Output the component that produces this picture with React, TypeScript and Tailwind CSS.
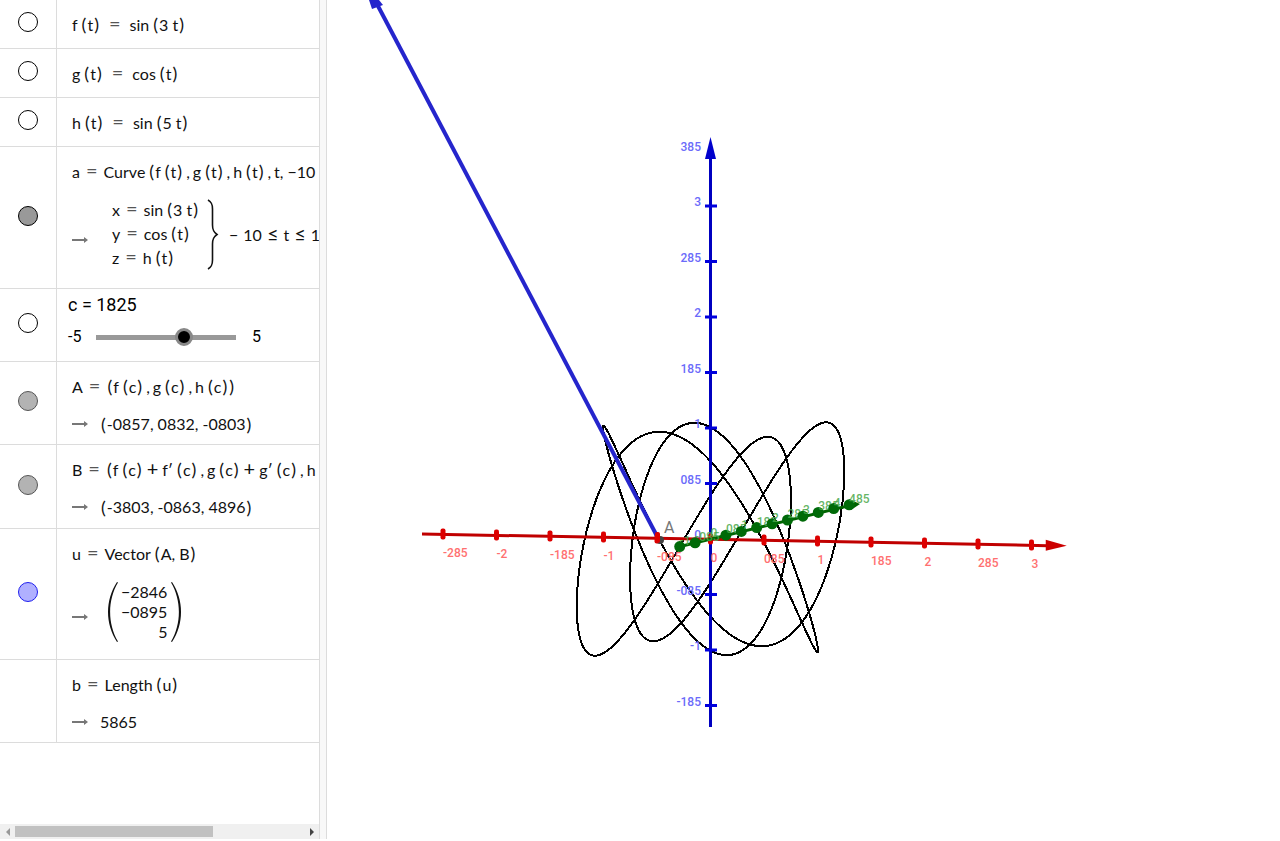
import type { ReactNode } from "react";

// Where the origin and the unit vectors of the 3D scene land on the canvas
const ORIGIN = { x: 710.5, y: 539 };
const UNIT_X = { x: 107, y: 2 };
const UNIT_Y = { x: 30.8, y: -7.6 };
const UNIT_Z = { x: 0, y: -111 };

const X_LABELS = ["-285", "-2", "-185", "-1", "-085", "0", "085", "1", "185", "2", "285", "3"];
const Y_LABELS = ["-1", "-085", "0", "085", "1", "185", "2", "285", "3", "385", "4", "485"];
const Z_LABELS = ["-185", "-1", "-085", "0", "085", "1", "185", "2", "285", "3", "385"];

function project(x: number, y: number, z: number) {
  return {
    x: ORIGIN.x + x * UNIT_X.x + y * UNIT_Y.x + z * UNIT_Z.x,
    y: ORIGIN.y + x * UNIT_X.y + y * UNIT_Y.y + z * UNIT_Z.y,
  };
}

const CURVE_POINTS = Array.from({ length: 801 }, (_, i) => {
  const t = (i / 800) * 2 * Math.PI;
  const p = project(Math.sin(3 * t), Math.cos(t), Math.sin(5 * t));
  return `${p.x.toFixed(1)},${p.y.toFixed(1)}`;
}).join(" ");

export default function App() {
  return (
    <div className="flex h-screen overflow-hidden bg-white text-[#111]">
      <AlgebraView />
      <div className="mb-0.5 w-[7px] shrink-0 border-r border-[#dcdcdc] bg-[#f8f8f8]" />
      <main className="min-w-0 flex-1">
        <Graphics />
      </main>
    </div>
  );
}

function AlgebraView() {
  return (
    <aside className="mb-0.5 flex w-80 shrink-0 flex-col border-r border-[#dcdcdc] font-['Lato',sans-serif] text-base leading-6">
      <ul className="min-h-0 flex-1 overflow-hidden">
        <Row name="f" marker="border-black bg-white" pad="pb-[11px]">
          <Definition>
            <Call name="f" arg="t" /><Eq wide /><Call name="sin" arg="3 t" />
          </Definition>
        </Row>
        <Row name="g" marker="border-black bg-white" pad="pb-[11px]">
          <Definition>
            <Call name="g" arg="t" /><Eq wide /><Call name="cos" arg="t" />
          </Definition>
        </Row>
        <Row name="h" marker="border-black bg-white" pad="pb-[11px]">
          <Definition>
            <Call name="h" arg="t" /><Eq wide /><Call name="sin" arg="5 t" />
          </Definition>
        </Row>
        <Row name="a" marker="border-black bg-[#999]" pad="pb-[17px]">
          <Definition>
            a<Eq />Curve<span className="ml-[3px]"><Paren>(</Paren></span>
            <Call name="f" arg="t" /><Comma /><Call name="g" arg="t" /><Comma />
            <Call name="h" arg="t" /><Comma />t,<span className="ml-1">−10</span>
          </Definition>
          <Output tall>
            <div className="ml-3 h-[73px]">
              <div>x<Eq /><Call name="sin" arg="3 t" /></div>
              <div>y<Eq /><Call name="cos" arg="t" /></div>
              <div>z<Eq /><Call name="h" arg="t" /></div>
            </div>
            <svg className="ml-2 h-[73px] w-3 shrink-0" viewBox="0 0 12 73" fill="none" stroke="#111" strokeWidth="1.6">
              <path d="M1 2C4.500 4 5.500 6 5.500 11V27C5.500 32 6.500 34 10 36.500C6.500 39 5.500 41 5.500 46V62C5.500 67 4.500 69 1 71" />
            </svg>
            <div className="ml-2.5 flex items-baseline gap-[5px]">
              <span>−</span><span>10</span><Big>≤</Big><span>t</span><Big>≤</Big><span>10</span>
            </div>
          </Output>
        </Row>
        <li className="flex border-b border-[#dcdcdc]">
          <Marker name="c" marker="border-black bg-white" />
          <div className="flex-1 pb-2.5 pl-[11px] pt-1 font-['Roboto',sans-serif] text-black">
            <label htmlFor="c" className="block text-lg leading-6">c = 1825</label>
            <div className="mt-1.5 flex h-7 items-center">
              <span className="w-7">-5</span>
              <input
                id="c"
                type="range"
                min={-5}
                max={5}
                step={0.05}
                defaultValue={1.45}
                className="h-[18px] w-[140px] appearance-none bg-transparent [&::-webkit-slider-runnable-track]:h-[5px] [&::-webkit-slider-runnable-track]:bg-[#999] [&::-webkit-slider-thumb]:-mt-[7px] [&::-webkit-slider-thumb]:size-[18px] [&::-webkit-slider-thumb]:appearance-none [&::-webkit-slider-thumb]:rounded-full [&::-webkit-slider-thumb]:border-3 [&::-webkit-slider-thumb]:border-[#888] [&::-webkit-slider-thumb]:bg-black"
              />
              <span className="ml-4">5</span>
            </div>
          </div>
        </li>
        <Row name="A" marker="border-[#555] bg-[#b3b3b3]" pad="pb-2">
          <Definition>
            A<Eq /><Paren>(</Paren><Call name="f" arg="c" /><Comma /><Call name="g" arg="c" /><Comma />
            <Call name="h" arg="c" /><Paren>)</Paren>
          </Definition>
          <Output><Paren>(</Paren>-0857, 0832, -0803<Paren>)</Paren></Output>
        </Row>
        <Row name="B" marker="border-[#555] bg-[#b3b3b3]" pad="pb-[9px]">
          <Definition>
            B<Eq /><Paren>(</Paren><Call name="f" arg="c" /><Plus /><Call name="f′" arg="c" /><Comma />
            <Call name="g" arg="c" /><Plus /><Call name="g′" arg="c" /><Comma />h
          </Definition>
          <Output><Paren>(</Paren>-3803, -0863, 4896<Paren>)</Paren></Output>
        </Row>
        <Row name="u" marker="border-[#2020ee] bg-[#b0b0ff]" pad="pb-[15px]">
          <Definition>
            u<Eq /><Call name="Vector" arg="A, B" />
          </Definition>
          <Output tall>
            <svg className="ml-1.5 h-16 w-3 shrink-0" viewBox="0 0 12 64" fill="#111">
              <path d="M11 2C-1 20 -1 44 11 62L12 61.500C1.500 44 1.500 20 12 2.500Z" />
            </svg>
            <div className="mx-[3px] py-0.5 text-right leading-5">
              <div>−2846</div>
              <div>−0895</div>
              <div>5</div>
            </div>
            <svg className="h-16 w-3 shrink-0" viewBox="0 0 12 64" fill="#111">
              <path d="M2 2C14 20 14 44 2 62L1 61.500C11.500 44 11.500 20 1 2.500Z" />
            </svg>
          </Output>
        </Row>
        <Row name="b" pad="pb-2">
          <Definition>
            b<Eq /><Call name="Length" arg="u" />
          </Definition>
          <Output>5865</Output>
        </Row>
      </ul>
      <div className="flex h-[15px] shrink-0 items-center bg-[#f0f0f0]">
        <button aria-label="Scroll left" className="flex w-[15px] justify-center">
          <svg className="h-2 w-1" viewBox="0 0 4 8" fill="#999"><path d="M4 0V8L0 4Z" /></svg>
        </button>
        <div className="flex-1">
          <div className="h-[11px] w-[198px] bg-[#c1c1c1]" />
        </div>
        <button aria-label="Scroll right" className="flex w-[15px] justify-center">
          <svg className="h-2 w-1" viewBox="0 0 4 8" fill="#444"><path d="M0 0V8L4 4Z" /></svg>
        </button>
      </div>
    </aside>
  );
}

function Row({ name, marker, pad, children }: { name: string; marker?: string; pad: string; children: ReactNode }) {
  return (
    <li className="flex border-b border-[#dcdcdc]">
      <Marker name={name} marker={marker} />
      <div className={`min-w-0 flex-1 space-y-[13px] overflow-hidden whitespace-nowrap pl-[15px] pt-[13px] ${pad}`}>
        {children}
      </div>
    </li>
  );
}

function Marker({ name, marker }: { name: string; marker?: string }) {
  return (
    <div className="flex w-[57px] shrink-0 items-center justify-center border-r border-[#dcdcdc] pb-1">
      {marker && <button aria-label={`Show or hide ${name}`} className={`size-5 rounded-full border ${marker}`} />}
    </div>
  );
}

function Definition({ children }: { children: ReactNode }) {
  return <div className="flex h-6 items-baseline">{children}</div>;
}

function Output({ tall, children }: { tall?: boolean; children: ReactNode }) {
  return (
    <div className={`flex items-center ${tall ? "pt-px" : ""}`}>
      <svg className={`mr-3 h-2 w-4 shrink-0 ${tall ? "mt-2.5" : ""}`} viewBox="0 0 16 8" fill="#777">
        <path d="M0 3H12V1L16 4L12 7V5H0Z" />
      </svg>
      {children}
    </div>
  );
}

function Call({ name, arg }: { name: string; arg: string }) {
  return (
    <span>
      {name}<span className="ml-[3px]"><Paren>(</Paren></span>{arg}<Paren>)</Paren>
    </span>
  );
}

function Paren({ children }: { children: string }) {
  return <span className="mx-px text-lg leading-none">{children}</span>;
}

function Big({ children }: { children: string }) {
  return <span className="text-xl leading-none">{children}</span>;
}

function Comma() {
  return <span className="mx-[3px]">,</span>;
}

function Plus() {
  return <span className="mx-1 text-xl leading-none">+</span>;
}

function Eq({ wide }: { wide?: boolean }) {
  return <span className={`text-xl leading-none text-[#555] ${wide ? "mx-[9px]" : "mx-[6px]"}`}>=</span>;
}

function Graphics() {
  const tip = project(3.32, 0, 0);
  return (
    <svg
      className="block h-full w-full font-['Roboto',sans-serif] text-xs font-medium"
      viewBox="327 0 953 841"
      preserveAspectRatio="xMinYMin meet"
    >
      <polyline points={CURVE_POINTS} fill="none" stroke="#000" strokeWidth="2" shapeRendering="crispEdges" />

      {/* z axis */}
      <path d="M710.500 727V156" stroke="#0000c0" strokeWidth="3" />
      <path d="M710.500 137L716 159H705Z" fill="#0000cc" />
      {Z_LABELS.map((label, i) => {
        const y = project(0, 0, (i - 3) / 2).y;
        return (
          <g key={label}>
            {label !== "0" && label !== "385" && <rect x="705" y={y - 1.5} width="12" height="3" fill="#0000dd" />}
            <text x="701" y={y} textAnchor="end" fill="#6b6bfa">{label}</text>
          </g>
        );
      })}

      {/* x axis */}
      <path d={`M422 534L${tip.x - 18} ${tip.y}`} stroke="#c00000" strokeWidth="3" />
      <path d={`M${tip.x - 20} ${tip.y - 6}L${tip.x + 1} ${tip.y}L${tip.x - 20} ${tip.y + 5}Z`} fill="#cc0000" />
      {X_LABELS.map((label, i) => {
        const p = project((i - 5) / 2, 0, 0);
        return (
          <g key={label}>
            <rect x={p.x - 2.5} y={p.y - 5.5} width="5" height="11" rx="2" fill="#dd0000" />
            <text x={p.x} y={p.y + 23} fill="#ff7070">{label}</text>
          </g>
        );
      })}

      {/* vector u, running off the top of the view */}
      <circle cx="660" cy="540" r="4" fill="#444" />
      <path d="M658 538L378 6" stroke="#2525cc" strokeWidth="4" />
      <path d="M369 0H379L383 5L372 9Z" fill="#2525cc" />
      <rect x="655" y="532" width="5" height="11" rx="2" fill="#dd0000" />
      <text x="664" y="533" fill="#777" className="text-base font-normal">A</text>

      {/* y axis */}
      <path d="M678 547L856 504" stroke="#006400" strokeWidth="3" />
      <path d="M849 499L860 504L851 510Z" fill="#006400" />
      {Y_LABELS.map((label, i) => {
        const p = project(0, (i - 2) / 2, 0);
        return (
          <g key={label}>
            {label !== "0" && <circle cx={p.x} cy={p.y} r="5.500" fill="#006a08" />}
            <text x={p.x} y={p.y - 2} fill="#4aa84a" fillOpacity="0.85">{label}</text>
          </g>
        );
      })}
    </svg>
  );
}
